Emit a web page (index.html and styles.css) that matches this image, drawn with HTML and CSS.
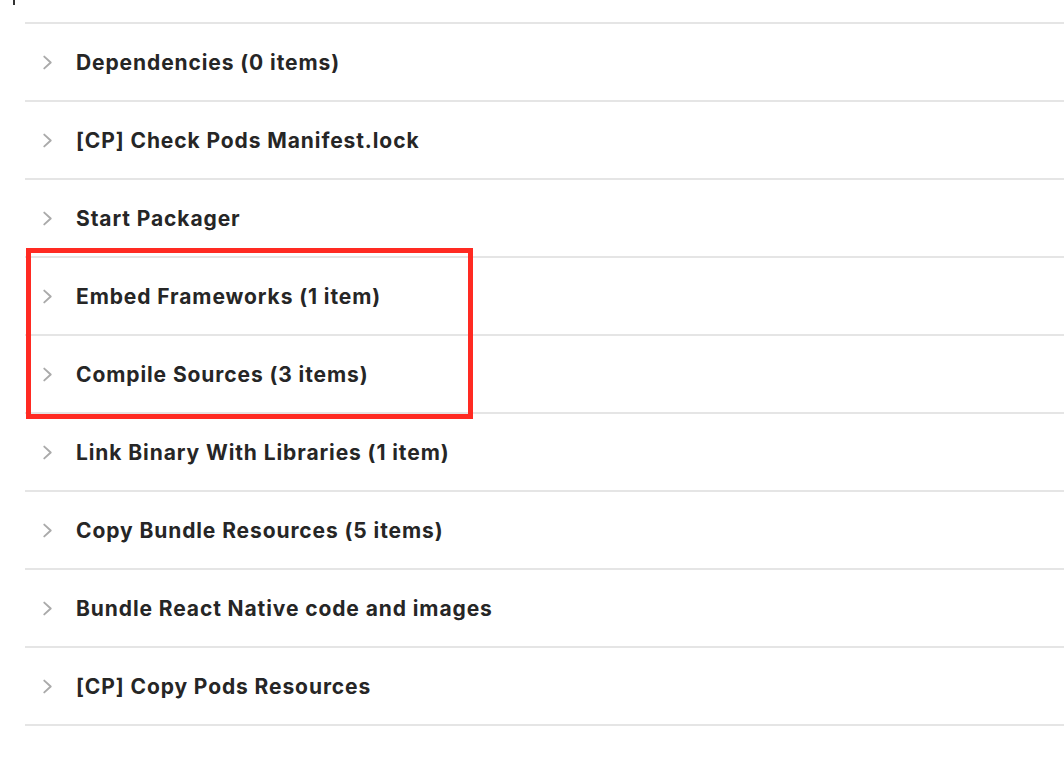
FILE: index.html
```html
<!DOCTYPE html>
<html lang="en">
<head>
<meta charset="utf-8">
<title>Build Phases</title>
<link rel="stylesheet" href="styles.css">
</head>
<body>
<div class="caret"></div>
<div class="phases">
  <div class="phase"><svg class="chev" viewBox="0 0 10 14"><path d="M2 1.5 L8 7 L2 12.5"/></svg><span class="label">Dependencies (0 items)</span></div>
  <div class="phase"><svg class="chev" viewBox="0 0 10 14"><path d="M2 1.5 L8 7 L2 12.5"/></svg><span class="label">[CP] Check Pods Manifest.lock</span></div>
  <div class="phase"><svg class="chev" viewBox="0 0 10 14"><path d="M2 1.5 L8 7 L2 12.5"/></svg><span class="label">Start Packager</span></div>
  <div class="group">
    <div class="phase"><svg class="chev" viewBox="0 0 10 14"><path d="M2 1.5 L8 7 L2 12.5"/></svg><span class="label">Embed Frameworks (1 item)</span></div>
    <div class="phase"><svg class="chev" viewBox="0 0 10 14"><path d="M2 1.5 L8 7 L2 12.5"/></svg><span class="label">Compile Sources (3 items)</span></div>
    <div class="highlight"></div>
  </div>
  <div class="phase"><svg class="chev" viewBox="0 0 10 14"><path d="M2 1.5 L8 7 L2 12.5"/></svg><span class="label">Link Binary With Libraries (1 item)</span></div>
  <div class="phase"><svg class="chev" viewBox="0 0 10 14"><path d="M2 1.5 L8 7 L2 12.5"/></svg><span class="label">Copy Bundle Resources (5 items)</span></div>
  <div class="phase"><svg class="chev" viewBox="0 0 10 14"><path d="M2 1.5 L8 7 L2 12.5"/></svg><span class="label">Bundle React Native code and images</span></div>
  <div class="phase"><svg class="chev" viewBox="0 0 10 14"><path d="M2 1.5 L8 7 L2 12.5"/></svg><span class="label">[CP] Copy Pods Resources</span></div>
  <div class="end"></div>
</div>
</body>
</html>
```
FILE: styles.css
```css
html, body {
  margin: 0;
  padding: 0;
  background: #ffffff;
}
body {
  font-family: Inter, "Open Sans", "Liberation Sans", sans-serif;
  color: #262626;
  position: relative;
  height: 758px;
  overflow: hidden;
}
.caret {
  position: absolute;
  left: 13px;
  top: 0;
  width: 2px;
  height: 5px;
  background: #333;
}
.phases {
  padding-top: 22px;
  margin-left: 25px;
}
.phase {
  display: flex;
  align-items: center;
  height: 76px;
  border-top: 2px solid #e5e5e5;
}
.chev {
  width: 11px;
  height: 15px;
  margin-left: 17px;
  margin-right: 23px;
  fill: none;
  stroke: #aaaaaa;
  stroke-width: 1.8;
  stroke-linecap: round;
  stroke-linejoin: round;
}
.label {
  font-size: 21px;
  font-weight: 700;
  letter-spacing: 0.9px;
}
.group {
  position: relative;
}
.highlight {
  position: absolute;
  left: 1px;
  top: -8px;
  width: 447px;
  height: 171px;
  box-sizing: border-box;
  border: 5px solid #ff2a22;
}
.end {
  border-top: 2px solid #e5e5e5;
}
```
